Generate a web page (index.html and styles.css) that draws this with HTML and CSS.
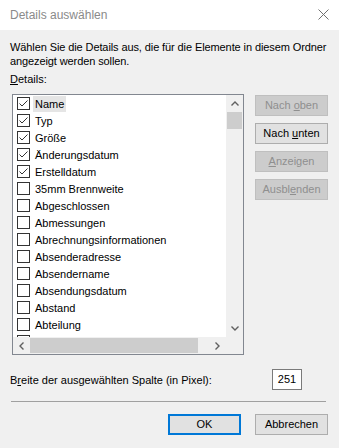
FILE: index.html
```html
<!DOCTYPE html>
<html>

<head>
  <title>Details auswählen</title>

  <link rel="stylesheet" href="styles.css">
</head>

<body>
  <div class="dialog">
    <!-- Title bar -->
    <div class="titlebar">
      <span class="title">Details auswählen</span>
      <svg class="close" width="11" height="11" viewBox="0 0 11 11">
        <path d="M0.5 0.5 L10.5 10.5 M10.5 0.5 L0.5 10.5" stroke="#707070" stroke-width="1" fill="none" />
      </svg>
    </div>

    <div class="content">
      <p class="intro">Wählen Sie die Details aus, die für die Elemente in diesem Ordner<br>angezeigt werden sollen.</p>
      <div class="label"><u>D</u>etails:</div>

      <div class="main">
        <!-- Details list -->
        <div class="listbox">
          <div class="items">
            <div class="item"><span class="box on"></span><span class="text focus">Name</span></div>
            <div class="item"><span class="box on"></span><span class="text">Typ</span></div>
            <div class="item"><span class="box on"></span><span class="text">Größe</span></div>
            <div class="item"><span class="box on"></span><span class="text">Änderungsdatum</span></div>
            <div class="item"><span class="box on"></span><span class="text">Erstelldatum</span></div>
            <div class="item"><span class="box"></span><span class="text">35mm Brennweite</span></div>
            <div class="item"><span class="box"></span><span class="text">Abgeschlossen</span></div>
            <div class="item"><span class="box"></span><span class="text">Abmessungen</span></div>
            <div class="item"><span class="box"></span><span class="text">Abrechnungsinformationen</span></div>
            <div class="item"><span class="box"></span><span class="text">Absenderadresse</span></div>
            <div class="item"><span class="box"></span><span class="text">Absendername</span></div>
            <div class="item"><span class="box"></span><span class="text">Absendungsdatum</span></div>
            <div class="item"><span class="box"></span><span class="text">Abstand</span></div>
            <div class="item"><span class="box"></span><span class="text">Abteilung</span></div>
            <div class="item"><span class="box"></span></div>
          </div>

          <div class="vscroll">
            <div class="arrow">
              <svg width="8" height="5" viewBox="0 0 8 5"><path d="M0.5 4.5 L4 1 L7.5 4.5" stroke="#606060" stroke-width="1.4" fill="none" /></svg>
            </div>
            <div class="vthumb"></div>
            <div class="track"></div>
            <div class="arrow">
              <svg width="8" height="5" viewBox="0 0 8 5"><path d="M0.5 0.5 L4 4 L7.5 0.5" stroke="#606060" stroke-width="1.4" fill="none" /></svg>
            </div>
          </div>

          <div class="hscroll">
            <div class="arrow">
              <svg width="5" height="8" viewBox="0 0 5 8"><path d="M4.5 0.5 L1 4 L4.5 7.5" stroke="#606060" stroke-width="1.4" fill="none" /></svg>
            </div>
            <div class="hthumb"></div>
            <div class="track"></div>
            <div class="arrow">
              <svg width="5" height="8" viewBox="0 0 5 8"><path d="M0.5 0.5 L4 4 L0.5 7.5" stroke="#606060" stroke-width="1.4" fill="none" /></svg>
            </div>
          </div>

          <div class="corner"></div>
        </div>

        <!-- Move / show / hide buttons -->
        <div class="side-buttons">
          <button class="btn" disabled>Nach <u>o</u>ben</button>
          <button class="btn">Nach <u>u</u>nten</button>
          <button class="btn" disabled><u>A</u>nzeigen</button>
          <button class="btn" disabled>Ausbl<u>e</u>nden</button>
        </div>
      </div>

      <div class="width-row">
        <span>B<u>r</u>eite der ausgewählten Spalte (in Pixel):</span>
        <div class="width-input">251</div>
      </div>

      <div class="separator"></div>

      <div class="footer">
        <button class="btn default">OK</button>
        <button class="btn">Abbrechen</button>
      </div>
    </div>
  </div>
</body>

</html>
```

FILE: styles.css
```css
/* Common styles */
* {
  margin: 0;
  padding: 0;
  box-sizing: border-box;
}

body {
  font-family: "Liberation Sans", Arial, sans-serif;
  font-size: 11px;
  color: #000;
  background-color: #f0f0f0;
}

.dialog {
  width: 339px;
  height: 448px;
  background-color: #f0f0f0;
  overflow: hidden;
}

/* Title bar */
.titlebar {
  height: 30px;
  background-color: #fff;
  display: flex;
  align-items: center;
  justify-content: space-between;
  padding: 0 10px 0 10px;
}

.title {
  color: #8a8a8a;
  font-size: 12px;
}

.close {
  display: block;
  margin-top: -1px;
}

/* Dialog content */
.content {
  padding: 10px 11px 0 10px;
}

.intro {
  line-height: 14px;
  white-space: nowrap;
  letter-spacing: -0.1px;
}

.label {
  line-height: 14px;
  margin-top: 4px;
}

u {
  text-decoration: underline;
  text-underline-offset: 1px;
}

.main {
  display: flex;
  margin-top: 8px;
}

/* List box */
.listbox {
  width: 232px;
  height: 261px;
  margin-left: 2px;
  border: 1px solid #828790;
  background-color: #fff;
  display: grid;
  grid-template-columns: 1fr 17px;
  grid-template-rows: 242px 17px;
}

.items {
  overflow: hidden;
  padding-left: 4px;
}

.item {
  height: 17px;
  display: flex;
  align-items: center;
  white-space: nowrap;
}

.box {
  width: 13px;
  height: 13px;
  border: 1px solid #333;
  background-color: #fff;
  flex-shrink: 0;
}

.box.on {
  background-image: url("data:image/svg+xml,%3Csvg xmlns='http://www.w3.org/2000/svg' width='11' height='11' viewBox='0 0 11 11'%3E%3Cpath d='M1.5 5.5 L4 8 L9.5 2.5' stroke='%23333' stroke-width='1' fill='none'/%3E%3C/svg%3E");
  background-repeat: no-repeat;
}

.text {
  margin-left: 3px;
  padding: 0 2px;
  line-height: 16px;
}

.text.focus {
  background-color: #e5e5e5;
}

/* Scroll bars */
.vscroll {
  display: flex;
  flex-direction: column;
  background-color: #f0f0f0;
}

.hscroll {
  display: flex;
  background-color: #f0f0f0;
}

.arrow {
  width: 17px;
  height: 17px;
  display: flex;
  align-items: center;
  justify-content: center;
  flex-shrink: 0;
}

.arrow svg {
  display: block;
}

.track {
  flex: 1;
}

.vthumb {
  height: 17px;
  margin: 0 1px;
  background-color: #cdcdcd;
}

.hthumb {
  width: 168px;
  margin: 1px 0;
  background-color: #cdcdcd;
}

.corner {
  background-color: #f0f0f0;
}

/* Buttons */
.btn {
  font-family: "Liberation Sans", Arial, sans-serif;
  font-size: 11px;
  width: 73px;
  height: 21px;
  background-color: #e1e1e1;
  border: 1px solid #adadad;
  color: #000;
  line-height: 17px;
}

.btn:disabled {
  background-color: #cccccc;
  border-color: #bfbfbf;
  color: #8f8f8f;
}

.btn.default {
  border: 2px solid #0078d7;
}

.side-buttons {
  display: flex;
  flex-direction: column;
  gap: 7px;
  margin-left: 11px;
  margin-top: 1px;
}

/* Column width row */
.width-row {
  display: flex;
  align-items: center;
  justify-content: space-between;
  margin-top: 14px;
  padding-right: 26px;
}

.width-input {
  width: 30px;
  height: 21px;
  border: 1px solid #7a7a7a;
  background-color: #fff;
  text-align: center;
  line-height: 19px;
}

.separator {
  height: 1px;
  background-color: #a0a0a0;
  margin: 11px 2px 0 1px;
}

.footer {
  display: flex;
  justify-content: flex-end;
  gap: 14px;
  margin-top: 12px;
}
```
